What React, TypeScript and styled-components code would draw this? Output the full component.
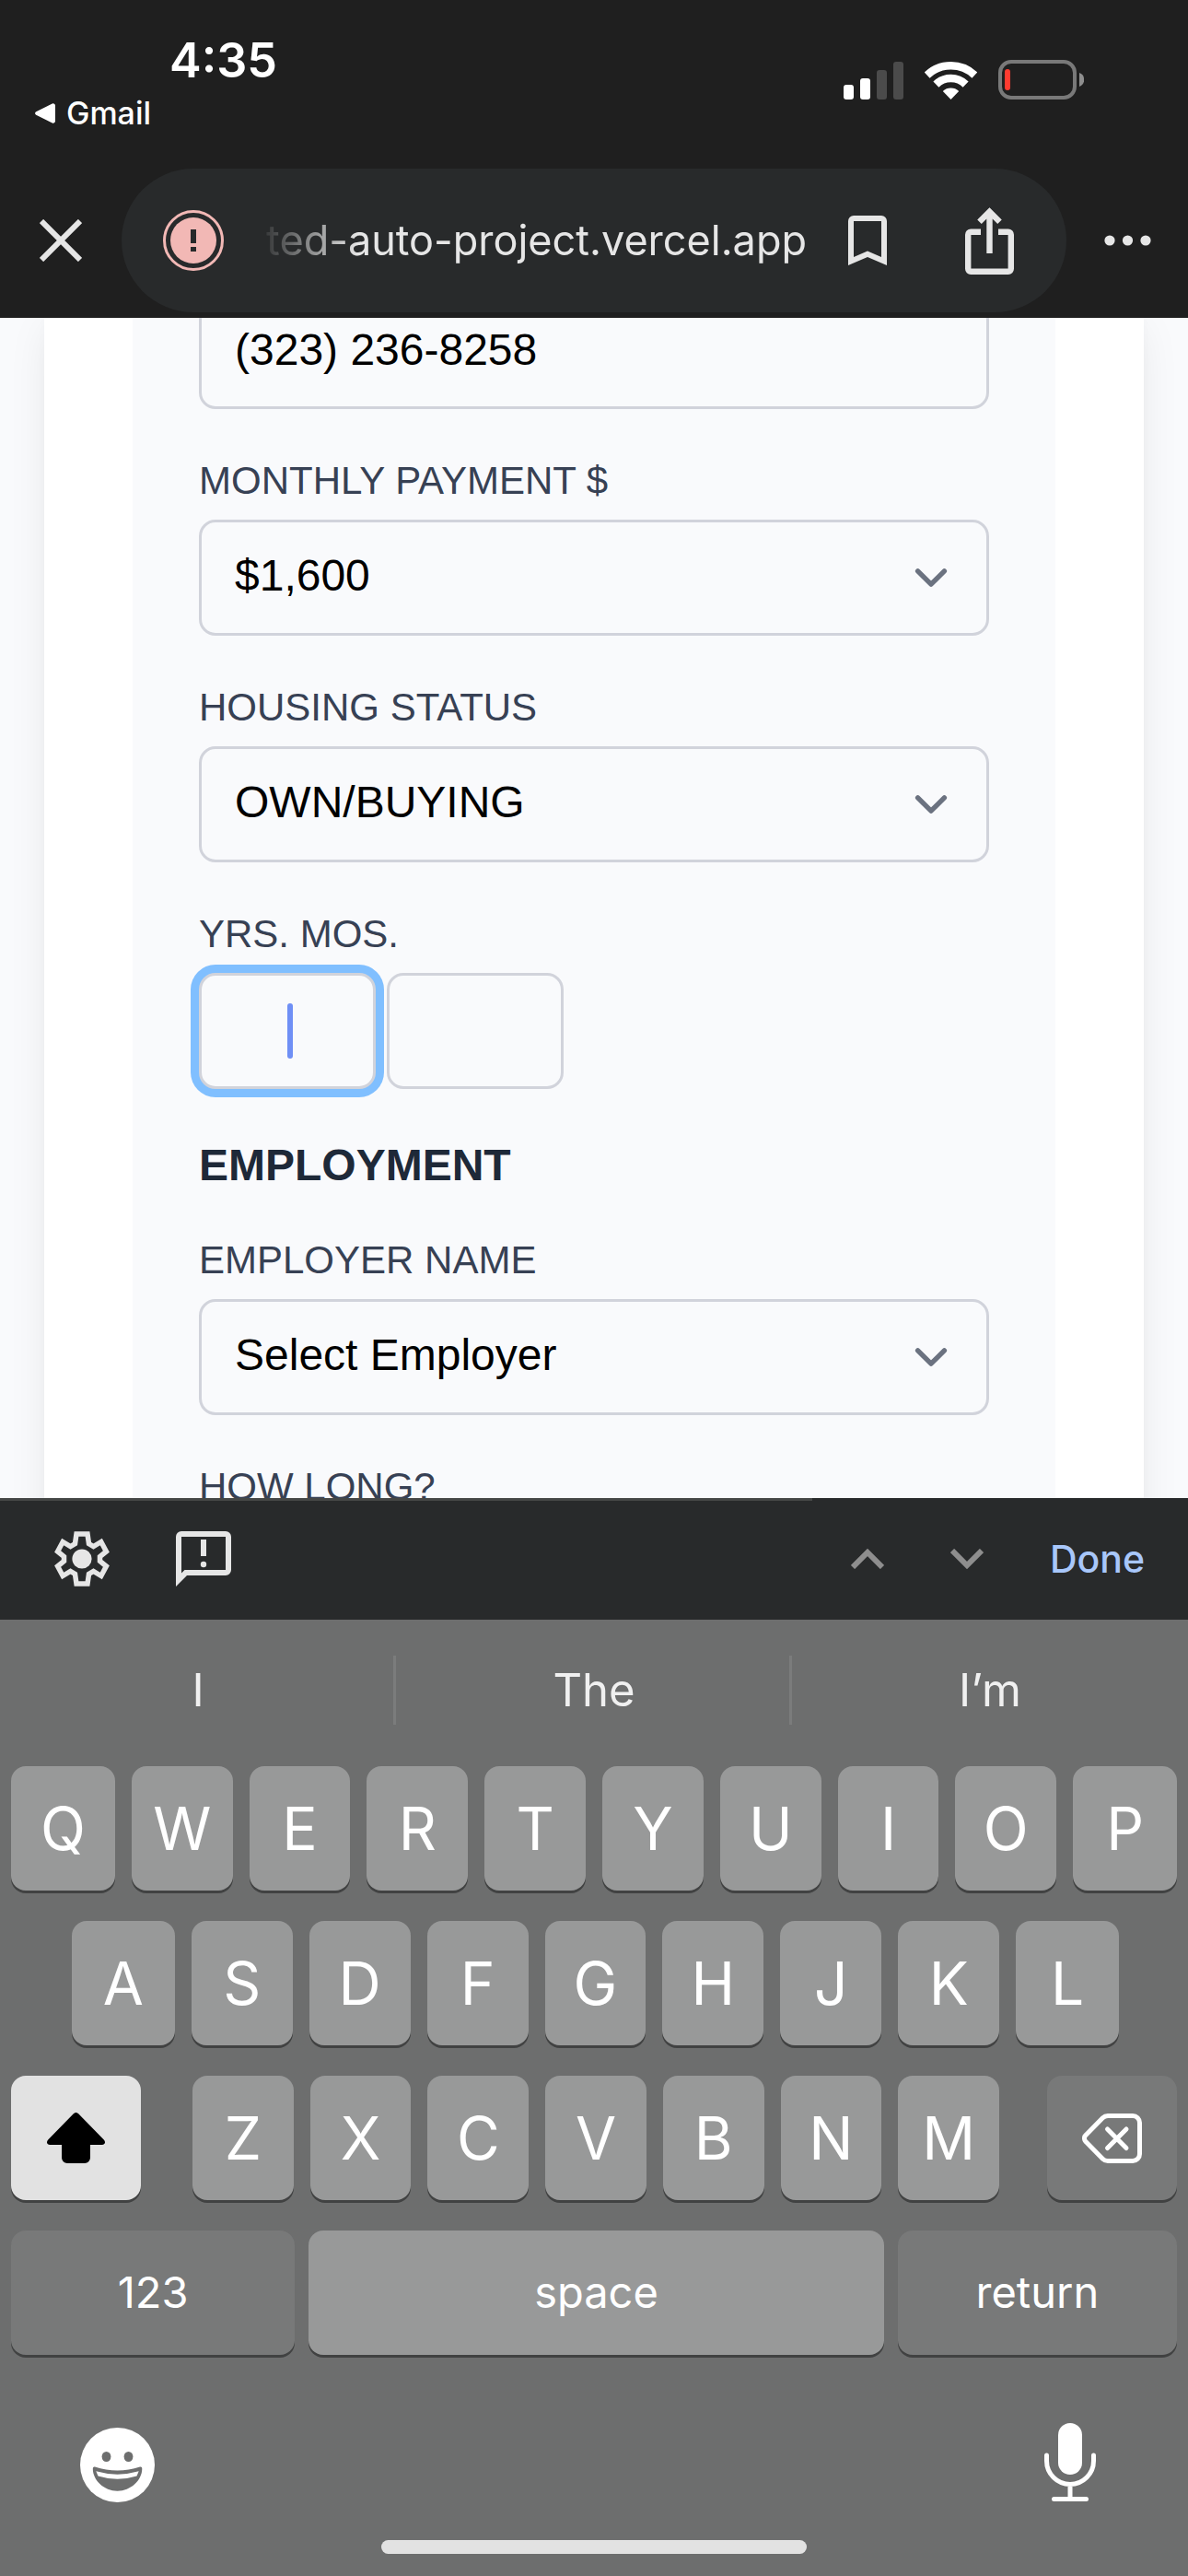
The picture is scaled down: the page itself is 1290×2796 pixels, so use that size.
import React, { useState } from "react";
import styled, { createGlobalStyle, css } from "styled-components";

const sans = `Inter, Roboto, "Liberation Sans", sans-serif`;
const arial = `Arial, "Liberation Sans", sans-serif`;

const GlobalStyle = createGlobalStyle`
  *, *::before, *::after { box-sizing: border-box; }
  body { margin: 0; background: #1f1f1f; }
  button, input, select { margin: 0; font: inherit; }
  svg { display: block; flex: none; }
`;

const Screen = styled.div`
  display: grid;
  grid-template-rows: auto minmax(0, 1fr) auto auto;
  height: 100vh;
  font-family: ${sans};
`;

/* ---------- browser header ---------- */

const Header = styled.header`
  background: #1f1f1f;
  color: #fff;
  padding-bottom: 6px;
`;

const StatusBar = styled.div`
  display: flex;
  justify-content: space-between;
  padding: 34px 113px 40px 38px;
`;

const StatusLeft = styled.div`
  display: flex;
  flex-direction: column;
  align-items: flex-start;
  gap: 5px;
`;

const Clock = styled.time`
  padding-left: 146px;
  font-size: 52px;
  font-weight: 600;
  line-height: 64px;
`;

const BackLink = styled.a`
  display: flex;
  align-items: center;
  gap: 12px;
  color: #fff;
  font-size: 34px;
  font-weight: 500;
  line-height: 40px;
  text-decoration: none;
`;

const StatusIcons = styled.div`
  display: flex;
  align-items: center;
  align-self: flex-start;
  gap: 23px;
  padding-top: 31px;
`;

const Toolbar = styled.div`
  display: grid;
  grid-template-columns: 132px minmax(0, 1fr) 132px;
`;

const IconButton = styled.button<{ $width?: number }>`
  display: flex;
  align-items: center;
  justify-content: center;
  width: ${(p) => (p.$width ? `${p.$width}px` : "auto")};
  padding: 0;
  border: 0;
  background: none;
  color: #e6e6e6;
`;

const AddressPill = styled.div`
  display: flex;
  align-items: stretch;
  height: 156px;
  padding: 0 42px 0 45px;
  border-radius: 78px;
  background: #282a2b;
`;

const Address = styled.div`
  flex: 1;
  align-self: center;
  min-width: 0;
  margin: 0 24px 0 36px;
  overflow: hidden;
  color: #e6e6e6;
  font-size: 45px;
  line-height: 60px;
  text-align: right;
  white-space: nowrap;
  mask-image: linear-gradient(to right, transparent, #000 110px);
`;

const PillActions = styled.div`
  display: flex;
  gap: 48px;
`;

/* ---------- web page ---------- */

const Page = styled.main`
  overflow: hidden;
  padding: 0 48px;
  background: #f9fafc;
  font-family: ${arial};
`;

const Card = styled.div`
  min-height: 100%;
  padding: 0 96px;
  background: #fff;
  box-shadow: 0 30px 45px -9px rgba(0, 0, 0, 0.1), 0 12px 18px -12px rgba(0, 0, 0, 0.1);
`;

const Panel = styled.form`
  display: flex;
  flex-direction: column;
  gap: 48px;
  margin-top: -27px;
  padding: 0 72px 72px;
  background: #f9fafc;
`;

const Field = styled.div`
  display: flex;
  flex-direction: column;
  gap: 12px;
`;

const labelText = css`
  padding: 0;
  color: #374154;
  font-size: 42px;
  line-height: 60px;
`;

const Label = styled.label`
  ${labelText}
`;

const Group = styled.fieldset`
  margin: 0;
  padding: 0;
  border: 0;
`;

const Legend = styled.legend`
  ${labelText}
  margin-bottom: 12px;
`;

const box = css`
  display: block;
  width: 100%;
  height: 126px;
  padding: 22px 36px 26px;
  border: 3px solid #d1d3db;
  border-radius: 18px;
  outline: 0;
  background: #f9fafc;
  color: #000;
  font-size: 48px;
  line-height: 72px;
`;

const TextBox = styled.input`
  ${box}
`;

const SelectWrap = styled.div`
  position: relative;
`;

const SelectBox = styled.select`
  ${box}
  appearance: none;
`;

const SelectArrow = styled.svg`
  position: absolute;
  top: 27px;
  right: 27px;
  pointer-events: none;
`;

const ShortFields = styled.div`
  display: flex;
  gap: 12px;
`;

const ShortField = styled.div`
  position: relative;
  width: 192px;
`;

const ShortBox = styled.input<{ $active?: boolean }>`
  ${box}
  text-align: center;
  box-shadow: ${(p) => (p.$active ? "0 0 0 9px #80bfff" : "none")};
`;

const Caret = styled.span`
  position: absolute;
  top: 33px;
  left: 50%;
  width: 6px;
  height: 60px;
  border-radius: 3px;
  background: #6f8ff5;
`;

const Section = styled.section`
  display: flex;
  flex-direction: column;
  gap: 38px;
`;

const SectionTitle = styled.h3`
  margin: 0;
  color: #1e2938;
  font-size: 48px;
  font-weight: 700;
  line-height: 70px;
`;

/* ---------- form assistant bar ---------- */

const AssistBar = styled.div`
  display: flex;
  align-items: center;
  gap: 72px;
  height: 132px;
  padding: 0 47px 0 59px;
  background: linear-gradient(#454746, #454746) 0 0 / 68.4% 3px no-repeat #282a2b;
`;

const Spacer = styled.span`
  flex: 1;
`;

const DoneButton = styled.button`
  padding: 0;
  border: 0;
  background: none;
  color: #a8c7fa;
  font-size: 41px;
  font-weight: 500;
  line-height: 60px;
`;

/* ---------- keyboard ---------- */

const Keyboard = styled.section`
  padding-bottom: 24px;
  background: #6d6e6e;
  color: #fff;
`;

const Suggestions = styled.div`
  display: grid;
  grid-template-columns: repeat(3, 1fr);
  padding: 39px 0 45px;
`;

const Suggestion = styled.button`
  height: 75px;
  padding: 0;
  border: 0;
  background: none;
  color: #f0f0f0;
  font-size: 49px;
  line-height: 72px;

  &:not(:last-child) {
    box-shadow: inset -3px 0 #7b7c7c;
  }
`;

const Keys = styled.div`
  display: flex;
  flex-direction: column;
  gap: 33px;
  padding: 0 12px;
`;

const KeyRow = styled.div<{ $columns: string; $gap?: number; $padding?: string }>`
  display: grid;
  grid-template-columns: ${(p) => p.$columns};
  gap: ${(p) => p.$gap ?? 18}px;
  padding: ${(p) => p.$padding ?? "0"};
`;

const ShiftRow = styled.div`
  display: grid;
  grid-template-columns: 141px minmax(0, 1fr) 141px;
`;

const tones = {
  letter: "#989999",
  dark: "#787979",
  light: "#e2e2e2",
};

const Key = styled.button<{ $tone?: keyof typeof tones; $word?: boolean }>`
  display: flex;
  align-items: center;
  justify-content: center;
  min-width: 0;
  height: 135px;
  padding: ${(p) => (p.$word ? "0 0 3px" : "0")};
  border: 0;
  border-radius: 16px;
  background: ${(p) => tones[p.$tone ?? "letter"]};
  box-shadow: 0 3px 0 #414242;
  color: ${(p) => (p.$tone === "light" ? "#000" : "#fff")};
  font-size: ${(p) => (p.$word ? 47 : 64)}px;
`;

const Dock = styled.div`
  display: flex;
  align-items: flex-end;
  justify-content: space-between;
  padding: 74px 100px 41px 87px;
`;

const HomeIndicator = styled.div`
  width: 462px;
  height: 15px;
  margin: 0 auto;
  border-radius: 8px;
  background: #e2e2e2;
`;

/* ---------- icons ---------- */

const BackTriangle = () => (
  <svg width="22" height="22" viewBox="0 0 22 22" fill="currentColor">
    <path d="M1.2 9.2 18.8.6A2.2 2.2 0 0 1 22 2.6v16.8a2.2 2.2 0 0 1-3.2 2L1.2 12.8a2 2 0 0 1 0-3.6z" />
  </svg>
);

const SignalIcon = () => (
  <svg width="65" height="42" viewBox="0 0 65 42" fill="#fff">
    <rect x="0" y="26" width="11" height="16" rx="3" />
    <rect x="18" y="19" width="11" height="23" rx="3" />
    <rect x="36" y="10" width="11" height="32" rx="3" fill="#4b4b4b" />
    <rect x="54" y="1" width="11" height="41" rx="3" fill="#4b4b4b" />
  </svg>
);

const WifiIcon = () => (
  <svg width="57" height="42" viewBox="0 0 57 42" fill="none" stroke="#fff" strokeWidth="8.6">
    <path d="M2.6 15.6a37.6 37.6 0 0 1 51.8 0" />
    <path d="M12.4 25.6a23 23 0 0 1 32.2 0" />
    <path d="M28.5 42 19.8 33a12.6 12.6 0 0 1 17.4 0z" fill="#fff" stroke="none" />
  </svg>
);

const BatteryIcon = () => (
  <svg width="93" height="43" viewBox="0 0 93 43">
    <rect x="2" y="2" width="81" height="39" rx="12" fill="none" stroke="#797979" strokeWidth="4" />
    <rect x="7" y="10" width="6" height="23" rx="3" fill="#ff3b30" />
    <path d="M88 14a8 8 0 0 1 0 15z" fill="#8e8e8e" />
  </svg>
);

const CloseIcon = () => (
  <svg width="46" height="46" viewBox="0 0 46 46" fill="none" stroke="currentColor" strokeWidth="6">
    <path d="M2 2l42 42M44 2 2 44" />
  </svg>
);

const WarningIcon = () => (
  <svg width="66" height="66" viewBox="0 0 66 66">
    <circle cx="33" cy="33" r="31.5" fill="none" stroke="#f2b8b5" strokeWidth="3" />
    <circle cx="33" cy="33" r="25" fill="#f2b8b5" />
    <path d="M30 21h6v15h-6zM30 40h6v5h-6z" fill="#282a2b" />
  </svg>
);

const BookmarkIcon = () => (
  <svg width="42" height="54" viewBox="0 0 42 54" fill="currentColor" fillRule="evenodd">
    <path d="M0 54V6a6 6 0 0 1 6-6h30a6 6 0 0 1 6 6v48l-21-9zM6 6v39l15-6.500 15 6.500V6z" />
  </svg>
);

const ShareIcon = () => (
  <svg width="53" height="73" viewBox="0 0 53 73" fill="none" stroke="currentColor" strokeWidth="6.4">
    <path d="M17 26.700H6.200a3 3 0 0 0-3 3v37.100a3 3 0 0 0 3 3h40.600a3 3 0 0 0 3-3V29.700a3 3 0 0 0-3-3H36" />
    <path d="M26.500 50V5M15.500 15.700l11-11 11 11" />
  </svg>
);

const MoreIcon = () => (
  <svg width="51" height="12" viewBox="0 0 51 12" fill="currentColor">
    <circle cx="6" cy="6" r="5.600" />
    <circle cx="25.500" cy="6" r="5.600" />
    <circle cx="45" cy="6" r="5.600" />
  </svg>
);

const GearIcon = () => (
  <svg width="60" height="60" viewBox="0 0 60 60" fill="none" stroke="currentColor" strokeWidth="5.500">
    <path d="M24 3H36L37.500 13.500 42.500 16.500 50.800 11.500 56.400 22 49.500 27.500V32.500L56.400 38 50.800 48.500 42.500 43.500 37.500 46.500 36 57H24L22.500 46.500 17.500 43.500 9.200 48.500 3.600 38 10.500 32.500V27.500L3.600 22 9.200 11.500 17.500 16.500 22.500 13.500z" />
    <circle cx="30" cy="30" r="10.600" fill="currentColor" stroke="none" />
  </svg>
);

const FeedbackIcon = () => (
  <svg width="60" height="60" viewBox="0 0 60 60" fill="currentColor" fillRule="evenodd">
    <path d="M0 60V6a6 6 0 0 1 6-6h48a6 6 0 0 1 6 6v36a6 6 0 0 1-6 6H12zM6 45.500 9.500 42H54V6H6z" />
    <path d="M27 9h6v18h-6z" />
    <circle cx="30" cy="36" r="3.200" />
  </svg>
);

const StepIcon = ({ up }: { up?: boolean }) => (
  <svg width="36" height="22" viewBox="0 0 36 22" fill="none" stroke="#8e8e8e" strokeWidth="6">
    <path d={up ? "M2 20 18 4l16 16" : "M2 2l16 16L34 2"} />
  </svg>
);

const ShiftIcon = () => (
  <svg width="63" height="55" viewBox="0 0 63 55" fill="currentColor">
    <path d="M28.800 1.200a4 4 0 0 1 5.400 0L61.800 29.600c2.400 2.500 1 5.400-2 5.400H47v14a6 6 0 0 1-6 6H22a6 6 0 0 1-6-6V35H3.200c-3 0-4.400-2.900-2-5.400z" />
  </svg>
);

const DeleteIcon = () => (
  <svg width="65" height="54" viewBox="0 0 65 54" fill="none" stroke="currentColor" strokeWidth="5" strokeLinecap="round" strokeLinejoin="round">
    <path d="M28 2.500h27a7.500 7.500 0 0 1 7.500 7.500v34a7.500 7.500 0 0 1-7.500 7.500H28a8 8 0 0 1-5.600-2.300L4 30.600a5 5 0 0 1 0-7.200L22.400 4.800A8 8 0 0 1 28 2.500z" />
    <path d="M27.500 17 48 37.500M48 17 27.500 37.500" />
  </svg>
);

const EmojiIcon = () => (
  <svg width="81" height="81" viewBox="0 0 81 81">
    <circle cx="40.500" cy="40.500" r="40.500" fill="#fff" />
    <g fill="#6d6e6e">
      <ellipse cx="28.500" cy="31.500" rx="4.900" ry="5.500" />
      <ellipse cx="52.500" cy="31.500" rx="4.900" ry="5.500" />
      <path d="M13.800 44.500Q14 42 16 42.600 40.500 50.500 65 42.600 67.300 42 67.300 44.500C67.300 57 55 68.700 40.500 68.700S13.800 57 13.800 44.500z" />
    </g>
    <path d="M17.300 47.300Q40.500 54 63.700 47.300L61.500 52.500Q40.500 59 19.500 52.500z" fill="#fff" />
  </svg>
);

const MicIcon = () => (
  <svg width="56" height="86" viewBox="0 0 56 86" fill="none" stroke="#fff" strokeWidth="5" strokeLinecap="round">
    <rect x="15" y="0" width="26" height="56" rx="13" fill="#fff" stroke="none" />
    <path d="M2.500 35v6a25.500 25.500 0 0 0 51 0v-6M28 67v14M10.500 82.500h35" />
  </svg>
);

/* ---------- parts ---------- */

type DropdownProps = { id: string; label: string; options: string[] };

const Dropdown = ({ id, label, options }: DropdownProps) => (
  <Field>
    <Label htmlFor={id}>{label}</Label>
    <SelectWrap>
      <SelectBox id={id} defaultValue={options[0]}>
        {options.map((o) => (
          <option key={o}>{o}</option>
        ))}
      </SelectBox>
      <SelectArrow width="72" height="72" viewBox="0 0 20 20" fill="none" stroke="#6b7280" strokeWidth="1.500" strokeLinecap="round" strokeLinejoin="round">
        <path d="M6 8l4 4 4-4" />
      </SelectArrow>
    </SelectWrap>
  </Field>
);

const Letters = ({ keys }: { keys: string }) => (
  <>
    {keys.split("").map((k) => (
      <Key key={k} type="button">
        {k}
      </Key>
    ))}
  </>
);

export default function App() {
  const [years, setYears] = useState("");
  const [months, setMonths] = useState("");

  return (
    <Screen>
      <GlobalStyle />
      <Header>
        <StatusBar>
          <StatusLeft>
            <Clock>4:35</Clock>
            <BackLink href="#gmail">
              <BackTriangle />
              Gmail
            </BackLink>
          </StatusLeft>
          <StatusIcons>
            <SignalIcon />
            <WifiIcon />
            <BatteryIcon />
          </StatusIcons>
        </StatusBar>
        <Toolbar>
          <IconButton type="button" aria-label="Close">
            <CloseIcon />
          </IconButton>
          <AddressPill>
            <IconButton type="button" aria-label="Site information" $width={66}>
              <WarningIcon />
            </IconButton>
            <Address>ted-auto-project.vercel.app</Address>
            <PillActions>
              <IconButton type="button" aria-label="Bookmark" $width={84}>
                <BookmarkIcon />
              </IconButton>
              <IconButton type="button" aria-label="Share" $width={84}>
                <ShareIcon />
              </IconButton>
            </PillActions>
          </AddressPill>
          <IconButton type="button" aria-label="More">
            <MoreIcon />
          </IconButton>
        </Toolbar>
      </Header>

      <Page>
        <Card>
          <Panel>
            <TextBox type="tel" aria-label="Phone" defaultValue="(323) 236-8258" />
            <Dropdown id="payment" label="MONTHLY PAYMENT $" options={["$1,600"]} />
            <Dropdown id="housing" label="HOUSING STATUS" options={["OWN/BUYING"]} />
            <Group>
              <Legend>YRS. MOS.</Legend>
              <ShortFields>
                <ShortField>
                  <ShortBox $active aria-label="Years" inputMode="numeric" value={years} onChange={(e) => setYears(e.target.value)} />
                  {years === "" && <Caret />}
                </ShortField>
                <ShortField>
                  <ShortBox aria-label="Months" inputMode="numeric" value={months} onChange={(e) => setMonths(e.target.value)} />
                </ShortField>
              </ShortFields>
            </Group>
            <Section>
              <SectionTitle>EMPLOYMENT</SectionTitle>
              <Dropdown id="employer" label="EMPLOYER NAME" options={["Select Employer"]} />
            </Section>
            <Field>
              <Label as="span">HOW LONG?</Label>
            </Field>
          </Panel>
        </Card>
      </Page>

      <AssistBar>
        <IconButton type="button" aria-label="Settings">
          <GearIcon />
        </IconButton>
        <IconButton type="button" aria-label="Send feedback">
          <FeedbackIcon />
        </IconButton>
        <Spacer />
        <IconButton type="button" aria-label="Previous field">
          <StepIcon up />
        </IconButton>
        <IconButton type="button" aria-label="Next field">
          <StepIcon />
        </IconButton>
        <DoneButton type="button">Done</DoneButton>
      </AssistBar>

      <Keyboard>
        <Suggestions>
          <Suggestion type="button">I</Suggestion>
          <Suggestion type="button">The</Suggestion>
          <Suggestion type="button">I’m</Suggestion>
        </Suggestions>
        <Keys>
          <KeyRow $columns="113fr repeat(8, 110fr) 113fr">
            <Letters keys="QWERTYUIOP" />
          </KeyRow>
          <KeyRow $columns="112fr repeat(7, 110fr) 112fr" $padding="0 63px 0 66px">
            <Letters keys="ASDFGHJKL" />
          </KeyRow>
          <ShiftRow>
            <Key type="button" aria-label="Shift" $tone="light">
              <ShiftIcon />
            </Key>
            <KeyRow $columns="repeat(7, 1fr)" $padding="0 52px 0 56px">
              <Letters keys="ZXCVBNM" />
            </KeyRow>
            <Key type="button" aria-label="Delete" $tone="dark">
              <DeleteIcon />
            </Key>
          </ShiftRow>
          <KeyRow $columns="308fr 624fr 303fr" $gap={15}>
            <Key type="button" $tone="dark" $word>
              123
            </Key>
            <Key type="button" $word>
              space
            </Key>
            <Key type="button" $tone="dark" $word>
              return
            </Key>
          </KeyRow>
        </Keys>
        <Dock>
          <IconButton type="button" aria-label="Emoji">
            <EmojiIcon />
          </IconButton>
          <IconButton type="button" aria-label="Dictate">
            <MicIcon />
          </IconButton>
        </Dock>
        <HomeIndicator />
      </Keyboard>
    </Screen>
  );
}
